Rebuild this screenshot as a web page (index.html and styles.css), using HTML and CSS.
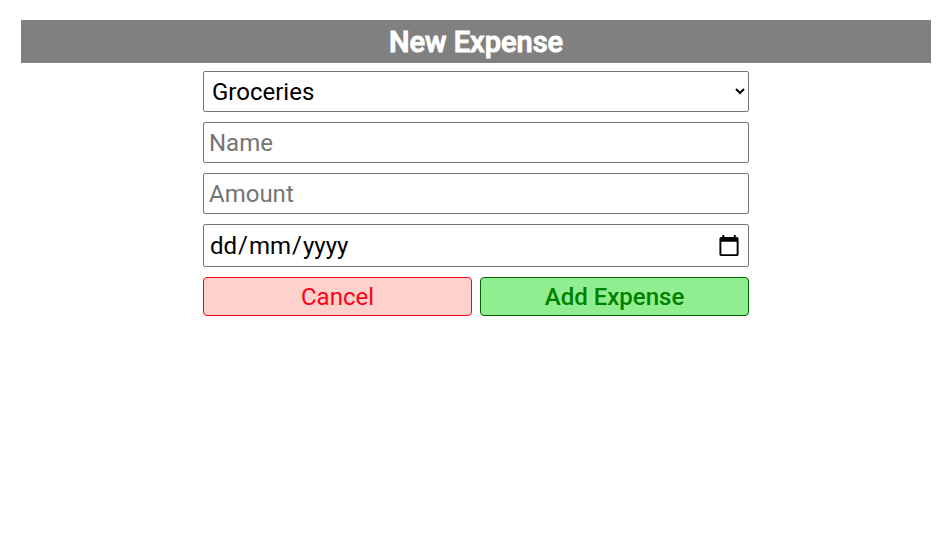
FILE: index.html
```html
<!DOCTYPE html>
<html lang="en-GB">
<head>
<meta charset="utf-8">
<title>New Expense</title>
<meta name="viewport" content="width=device-width, initial-scale=1">
<link rel="stylesheet" href="styles.css">
</head>
<body>
<main class="page">
<h1 class="title">New Expense</h1>
<form class="form">
<select class="field category" aria-label="Category"><option>Groceries</option></select>
<input class="field" type="text" placeholder="Name" aria-label="Name">
<input class="field" type="text" placeholder="Amount" aria-label="Amount">
<input class="field date" type="date" aria-label="Date">
<div class="actions">
<button class="button cancel" type="button">Cancel</button>
<button class="button add" type="submit">Add Expense</button>
</div>
</form>
</main>
</body>
</html>
```
FILE: styles.css
```css
* { box-sizing: border-box; }
body { margin: 0; background: #fff; font-family: Roboto, sans-serif; }
.page { padding: 20px 21px; }
.title { margin: 0 0 8px; padding: 5px 4px 3px; background: #808080; color: #fff; font-size: 29px; line-height: 35px; font-weight: 500; -webkit-text-stroke: 1px #fff; text-align: center; }
.form { display: flex; flex-direction: column; gap: 10px; width: 60%; margin: 0 auto; }
.field { width: 100%; height: 41px; margin: 0; padding: 4px 5px; border: 1px solid #767676; border-radius: 2px; background: #fff; color: #000; font: 400 24px/28px Roboto, sans-serif; }
.category { padding: 4px; }
.date { height: 43px; }
/* Day, month, year order; the separators fill the columns between them. */
.date::-webkit-datetime-edit-fields-wrapper { display: inline-grid; grid-template-columns: repeat(5, auto); grid-template-rows: auto; }
.date::-webkit-datetime-edit-text { grid-row: 1; }
.date::-webkit-datetime-edit-day-field { grid-row: 1; grid-column: 1; }
.date::-webkit-datetime-edit-month-field { grid-row: 1; grid-column: 3; }
.date::-webkit-datetime-edit-year-field { grid-row: 1; grid-column: 5; }
.actions { display: grid; grid-template-columns: 1fr 1fr; gap: 8px; }
.button { padding: 5px 5px 4px; border: 1px solid; border-radius: 4px; font: 400 24px/28px Roboto, sans-serif; }
.cancel { background: #ffd1cc; border-color: #ff0019; color: #ff0019; }
.add { background: #90ee90; border-color: #006400; color: #008000; font-weight: 500; }
```
